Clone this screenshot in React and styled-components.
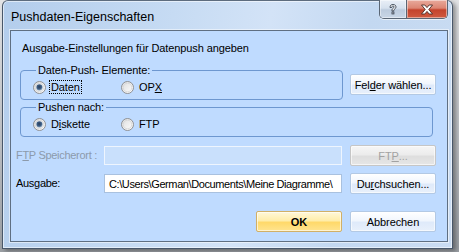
import React from "react";
import styled, { createGlobalStyle } from "styled-components";

const Global = createGlobalStyle`
  html, body { margin: 0; padding: 0; background: #b4b7bb; }
  body { font-family: "Liberation Sans", Arial, sans-serif; font-size: 11px; color: #000; letter-spacing: -0.1px; }
  * { box-sizing: border-box; }
`;

const Desktop = styled.div`
  width: 459px;
  height: 252px;
  padding-left: 2px;
  background: linear-gradient(180deg, #e2e3e5 0%, #b9bcc0 60%, #9a9ea3 100%);
`;

const Window = styled.div`
  width: 451px;
  height: 249px;
  display: flex;
  flex-direction: column;
  border: 1px solid #48576a;
  border-top-color: #5d6c7e;
  border-radius: 6px 6px 0 0;
  background: linear-gradient(100deg, #b3cdec 0%, #c6dbf3 35%, #d3e3f7 55%, #c3d8f1 75%, #cadcf2 100%);
  box-shadow: inset 0 0 0 1px rgba(255,255,255,0.55), 3px 2px 4px rgba(0,0,0,0.35);
`;

const TitleBar = styled.div`
  height: 29px;
  display: flex;
  align-items: flex-start;
  padding-left: 8px;
  padding-right: 4px;
`;

const Title = styled.div`
  font-family: "Liberation Sans", Arial, sans-serif;
  font-size: 12.5px;
  letter-spacing: 0;
  line-height: 15px;
  padding-top: 9px;
  color: #000;
  flex: 1;
`;

const CaptionGroup = styled.div`
  display: flex;
  height: 19px;
  margin-top: -1px;
  border: 1px solid #5a6675;
  border-top: none;
  border-radius: 0 0 5px 5px;
  overflow: hidden;
  box-shadow: 0 1px 0 rgba(255,255,255,0.6);
`;

const CaptionButton = styled.div`
  width: ${p => p.$w}px;
  height: 100%;
  display: flex;
  align-items: center;
  justify-content: center;
  background: ${p => p.$close
    ? "linear-gradient(180deg, #e8aa9c 0%, #dc8573 45%, #c4432c 55%, #cf5a40 100%)"
    : "linear-gradient(180deg, #e9eff7 0%, #d6e1ee 45%, #bccbdd 55%, #c9d6e6 100%)"};
  border-left: ${p => p.$close ? "1px solid #5a6675" : "none"};
  box-shadow: inset 0 0 0 1px rgba(255,255,255,0.45);
`;

const Client = styled.div`
  flex: 1;
  margin: 0 0 6px 7px;
  width: 438px;
  border: 1px solid #5f6f82;
  background: #bfdbff;
  box-shadow: 0 0 0 1px rgba(255,255,255,0.5);
  padding-left: 5px;
  display: flex;
  flex-direction: column;
`;

const Heading = styled.div`
  margin-top: 10px;
  margin-left: 6px;
  line-height: 14px;
`;

const GroupRow = styled.div`
  display: flex;
  align-items: flex-start;
  gap: 7px;
  margin-top: ${p => p.$mt}px;
  margin-left: 4px;
`;

const Group = styled.fieldset`
  width: ${p => p.$w}px;
  margin: 0;
  padding: 3px 0 5px 12px;
  border: 1px solid #6d97d0;
  border-radius: 4px;
  min-width: 0;
`;

const Legend = styled.legend`
  margin-left: 3px;
  padding: 0 2px;
  line-height: 13px;
  font-size: 11px;
`;

const RadioRow = styled.div`
  display: flex;
  align-items: center;
  height: 14px;
`;

const RadioItem = styled.div`
  width: ${p => p.$w}px;
  display: flex;
  align-items: center;
  gap: 3px;
`;

const RadioLabel = styled.span`
  line-height: 12px;
  padding: 0 1px;
  border: 1px dotted ${p => p.$focus ? "#000" : "transparent"};
`;

const Button = styled.div`
  width: 86px;
  height: 21px;
  flex: none;
  display: flex;
  align-items: center;
  justify-content: center;
  border-radius: 2px;
  font-weight: ${p => p.$default ? "bold" : "normal"};
  color: ${p => p.$disabled ? "#a2a2a2" : "#000"};
  border: 1px solid ${p => p.$default ? "#d1b067" : p.$disabled ? "#c6c6c6" : "#b3c9e4"};
  background: ${p => p.$default
    ? "linear-gradient(180deg, #fff8d9 0%, #ffedaa 45%, #ffd96a 55%, #ffe48f 100%)"
    : p.$disabled
      ? "linear-gradient(180deg, #f6f6f6 0%, #ececec 45%, #dedede 55%, #e6e6e6 100%)"
      : "linear-gradient(180deg, #ffffff 0%, #f1f6fd 45%, #dfeafa 55%, #e8f0fb 100%)"};
  box-shadow: inset 0 0 0 1px rgba(255,255,255,0.6);
  margin-top: ${p => p.$mt || 0}px;
`;

const FieldRow = styled.div`
  display: flex;
  align-items: center;
  margin-top: ${p => p.$mt}px;
  height: 21px;
`;

const FieldLabel = styled.div`
  width: 88px;
  white-space: nowrap;
  letter-spacing: -0.3px;
  color: ${p => p.$disabled ? "#8c9aab" : "#000"};
  line-height: 13px;
`;

const Input = styled.div`
  width: 238px;
  height: 19px;
  margin-right: 8px;
  padding-left: 4px;
  display: flex;
  align-items: center;
  white-space: nowrap;
  overflow: hidden;
  letter-spacing: -0.4px;
  background: ${p => p.$disabled ? "#c9e0fc" : "#ffffff"};
  border: 1px solid ${p => p.$disabled ? "#eef5fe" : "#a9c1df"};
`;

const Footer = styled.div`
  display: flex;
  gap: 8px;
  margin-top: 17px;
  margin-left: 240px;
`;

const Radio = ({ checked }) => (
  <svg width="13" height="13" viewBox="0 0 13 13">
    <defs>
      <linearGradient id="rbg" x1="0" y1="0" x2="1" y2="1">
        <stop offset="0" stopColor="#dcdcdc" />
        <stop offset="1" stopColor="#ffffff" />
      </linearGradient>
      <radialGradient id="rdot" cx="0.45" cy="0.4" r="0.6">
        <stop offset="0" stopColor="#2a3e5a" />
        <stop offset="0.6" stopColor="#3d5f88" />
        <stop offset="1" stopColor="#b7c9d8" />
      </radialGradient>
    </defs>
    <circle cx="6.5" cy="6.5" r="6" fill="url(#rbg)" stroke="#8e9093" />
    <circle cx="6.5" cy="6.5" r="4.3" fill="none" stroke="#d4d4d4" strokeWidth="0.8" />
    {checked && <circle cx="6.5" cy="6.5" r="3.2" fill="url(#rdot)" />}
  </svg>
);

const HelpIcon = () => (
  <svg width="12" height="13" viewBox="0 0 12 13">
    <path d="M3 4.5 C3 2 4.5 1.5 6 1.5 C8 1.5 9 2.6 9 4 C9 5.6 7.2 6 6.8 7.2 L6.8 8 L5 8 L5 6.8 C5.3 5.2 7.2 5 7.2 4 C7.2 3.3 6.7 3 6 3 C5.3 3 4.8 3.4 4.8 4.5 Z"
      fill="#fff" stroke="#3c4654" strokeWidth="0.9" />
    <rect x="5" y="9" width="1.9" height="1.9" fill="#fff" stroke="#3c4654" strokeWidth="0.9" />
  </svg>
);

const CloseIcon = () => (
  <svg width="14" height="11" viewBox="0 0 14 11">
    <path d="M1.5 1 L4.8 1 L7 3.6 L9.2 1 L12.5 1 L8.8 5.5 L12.5 10 L9.2 10 L7 7.4 L4.8 10 L1.5 10 L5.2 5.5 Z"
      fill="#fff" stroke="#4a2a24" strokeWidth="0.9" strokeLinejoin="round" />
  </svg>
);

export default function App() {
  return (
    <>
      <Global />
      <Desktop>
        <Window>
          <TitleBar>
            <Title>Pushdaten-Eigenschaften</Title>
            <CaptionGroup>
              <CaptionButton $w={26}><HelpIcon /></CaptionButton>
              <CaptionButton $w={41} $close><CloseIcon /></CaptionButton>
            </CaptionGroup>
          </TitleBar>
          <Client>
            <Heading>Ausgabe-Einstellungen für Datenpush angeben</Heading>
            <GroupRow $mt={9}>
              <Group $w={323}>
                <Legend>Daten-Push- Elemente:</Legend>
                <RadioRow>
                  <RadioItem $w={88}>
                    <Radio checked />
                    <RadioLabel $focus>Daten</RadioLabel>
                  </RadioItem>
                  <RadioItem $w={80}>
                    <Radio />
                    <RadioLabel>OP<u>X</u></RadioLabel>
                  </RadioItem>
                </RadioRow>
              </Group>
              <Button $mt={10}>Fel<u>d</u>er wählen...</Button>
            </GroupRow>
            <GroupRow $mt={1}>
              <Group $w={413}>
                <Legend>Pushen nach:</Legend>
                <RadioRow>
                  <RadioItem $w={88}>
                    <Radio checked />
                    <RadioLabel>D<u>i</u>skette</RadioLabel>
                  </RadioItem>
                  <RadioItem $w={80}>
                    <Radio />
                    <RadioLabel>FTP</RadioLabel>
                  </RadioItem>
                </RadioRow>
              </Group>
            </GroupRow>
            <FieldRow $mt={8}>
              <FieldLabel $disabled>F<u>T</u>P Speicherort :</FieldLabel>
              <Input $disabled />
              <Button $disabled>FT<u>P</u>...</Button>
            </FieldRow>
            <FieldRow $mt={7}>
              <FieldLabel>Aus<u>g</u>abe:</FieldLabel>
              <Input>C:\Users\German\Documents\Meine Diagramme\</Input>
              <Button>Du<u>r</u>chsuchen...</Button>
            </FieldRow>
            <Footer>
              <Button $default>OK</Button>
              <Button>Abbrechen</Button>
            </Footer>
          </Client>
        </Window>
      </Desktop>
    </>
  );
}
